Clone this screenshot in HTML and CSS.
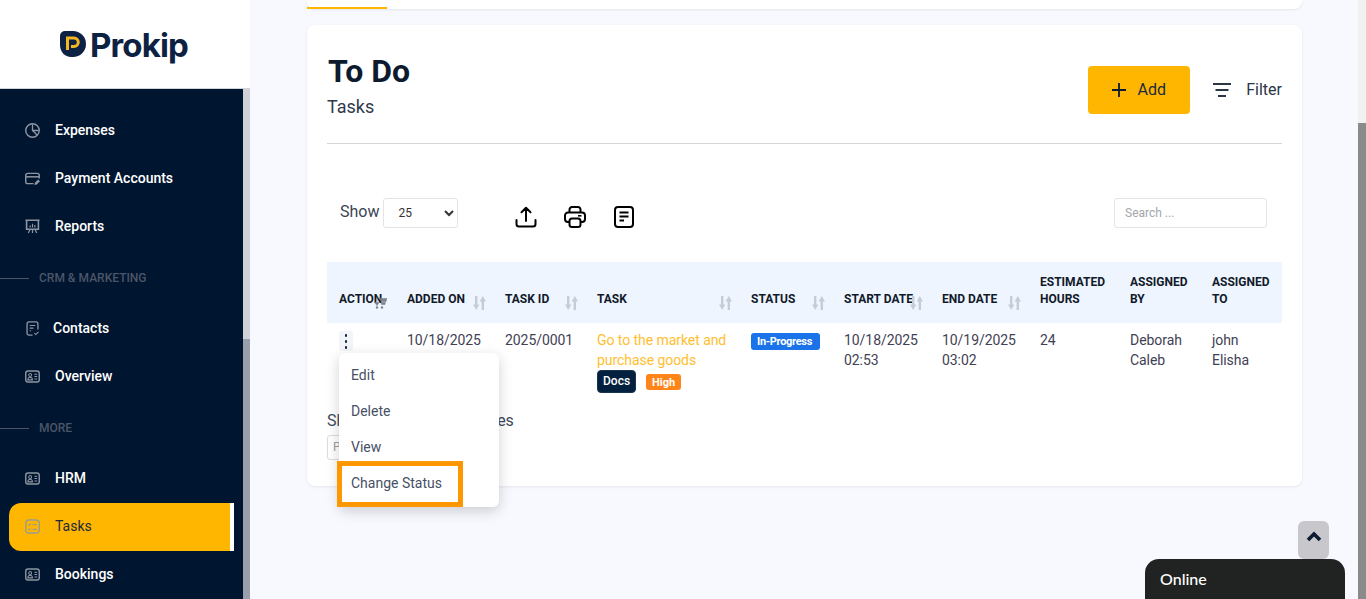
FILE: index.html
```html
<!DOCTYPE html>
<html lang="en">
<head>
<meta charset="utf-8">
<title>Tasks</title>
<link rel="stylesheet" href="styles.css">
</head>
<body>
<svg class="defs" width="0" height="0" aria-hidden="true">
  <symbol id="idcard" viewBox="0 0 16 16">
    <rect x=".8" y="2.200" width="14.400" height="11.600" rx="2.400" fill="none" stroke="currentColor" stroke-width="1.500"/>
    <circle cx="5.500" cy="6.400" r="1.500" fill="none" stroke="currentColor" stroke-width="1.100"/>
    <path d="M3 11.600c.2-2 1.200-2.700 2.500-2.700s2.300.7 2.500 2.700z" fill="none" stroke="currentColor" stroke-width="1.100"/>
    <path d="M10 5.600h3M10 8h3M10 10.600h3" stroke="currentColor" stroke-width="1.200" fill="none"/>
  </symbol>
  <symbol id="sort" viewBox="0 0 13 14">
    <path d="M3.200 0v11" stroke="currentColor" stroke-width="2.400" fill="none"/>
    <path d="M0 8.500h6.400L3.200 14z" fill="currentColor"/>
    <path d="M9.800 14V3" stroke="currentColor" stroke-width="2.400" fill="none"/>
    <path d="M6.600 5.500H13L9.800 0z" fill="currentColor"/>
  </symbol>
</svg>

<aside class="sidebar">
  <div class="brand">
    <svg class="brand-mark" viewBox="0 0 26 26" width="26" height="26">
      <path d="M5 0h8a13 13 0 0 1 0 26h-2C5 26 0 21 0 14V5a5 5 0 0 1 5-5z" fill="#0d2143"/>
      <path d="M7.500 19V7h6.500a4.200 4.200 0 0 1 0 8.500H11" fill="none" stroke="#f2b722" stroke-width="3"/>
    </svg>
    <span class="brand-name">Prokip</span>
  </div>
  <div class="side-body">
    <nav class="nav">
      <a class="nav-item">
        <svg class="nav-icon" viewBox="0 0 16 16"><circle cx="8" cy="8" r="7.200" fill="none" stroke="currentColor" stroke-width="1.500"/><path d="M8 1.500V8l4.700 4.500M8 8h6.700" fill="none" stroke="currentColor" stroke-width="1.400"/></svg>
        <span>Expenses</span>
      </a>
      <a class="nav-item">
        <svg class="nav-icon" viewBox="0 0 16 16"><path d="M9 13.500H2.800A2 2 0 0 1 .8 11.500V4.500a2 2 0 0 1 2-2h10.400a2 2 0 0 1 2 2V8" fill="none" stroke="currentColor" stroke-width="1.500"/><path d="M1 6.200h14" stroke="currentColor" stroke-width="1.600"/><path d="M10 15l.5-2.500 3.500-3.500 2 2-3.500 3.500z" fill="currentColor"/></svg>
        <span>Payment Accounts</span>
      </a>
      <a class="nav-item">
        <svg class="nav-icon" viewBox="0 0 16 16"><path d="M.5 1.300h15M1.700 1.500v9.500h12.600V1.500" fill="none" stroke="currentColor" stroke-width="1.700"/><path d="M5.500 9V7M8 9V5M10.500 9V6.500M5.500 11l-2 4M10.500 11l2 4M8 11v4" stroke="currentColor" stroke-width="1.300" fill="none"/></svg>
        <span>Reports</span>
      </a>
      <div class="nav-section"><span class="nav-rule"></span><span>CRM &amp; MARKETING</span></div>
      <a class="nav-item nav-item-tight">
        <svg class="nav-icon" viewBox="0 0 16 16"><path d="M8 15H4.200A2 2 0 0 1 2.200 13V3a2 2 0 0 1 2-2h7.600a2 2 0 0 1 2 2V9" fill="none" stroke="currentColor" stroke-width="1.400"/><path d="M5 4.800h6M5 7.600h4M5 10.400h1.500" stroke="currentColor" stroke-width="1.300"/><path d="M10 13l1.500 1.500 3-3" fill="none" stroke="currentColor" stroke-width="1.100"/></svg>
        <span>Contacts</span>
      </a>
      <a class="nav-item">
        <svg class="nav-icon"><use href="#idcard"/></svg>
        <span>Overview</span>
      </a>
      <div class="nav-section"><span class="nav-rule"></span><span>MORE</span></div>
      <a class="nav-item">
        <svg class="nav-icon"><use href="#idcard"/></svg>
        <span>HRM</span>
      </a>
      <a class="nav-item nav-item-active">
        <svg class="nav-icon" viewBox="0 0 16 16"><rect x=".8" y="1" width="14.400" height="14" rx="3.500" fill="none" stroke="currentColor" stroke-width="1.500"/><path d="M3.500 5.500l1 1 1.500-1.500M3.500 10.500l1 1 1.500-1.500M8 6h4.500M8 11h4.500" fill="none" stroke="currentColor" stroke-width="1.200"/></svg>
        <span>Tasks</span>
      </a>
      <a class="nav-item">
        <svg class="nav-icon"><use href="#idcard"/></svg>
        <span>Bookings</span>
      </a>
    </nav>
    <div class="side-scroll"><div class="side-thumb"></div></div>
  </div>
</aside>

<main class="main">
  <div class="tab-strip"><span class="tab-active"></span></div>

  <section class="card">
    <header class="card-head">
      <div>
        <h1 class="title">To Do</h1>
        <p class="subtitle">Tasks</p>
      </div>
      <div class="head-actions">
        <button class="btn-add" type="button">
          <svg viewBox="0 0 16 16" width="16" height="16"><path d="M8 1v14M1 8h14" stroke="#0d1b30" stroke-width="1.800" fill="none"/></svg>
          <span class="btn-label">Add</span>
        </button>
        <button class="btn-filter" type="button">
          <svg viewBox="0 0 18 14" width="18" height="14"><path d="M0 1h18M2.500 7h13M5 13h8" stroke="#2b3546" stroke-width="1.800" fill="none"/></svg>
          <span class="btn-label">Filter</span>
        </button>
      </div>
    </header>

    <div class="toolbar">
      <label class="show">Show
        <select class="show-select"><option>25</option></select>
      </label>
      <div class="tools">
        <svg viewBox="0 0 22 22" width="22" height="22"><path d="M11 15V2M6.500 6.200L11 1.800l4.500 4.400M1.500 14v4a2.500 2.500 0 0 0 2.500 2.500h14a2.500 2.500 0 0 0 2.500-2.500v-4" fill="none" stroke="#000" stroke-width="2" stroke-linecap="round" stroke-linejoin="round"/></svg>
        <svg viewBox="0 0 22 22" width="22" height="22"><path d="M5.500 6.500V3.500a2.500 2.500 0 0 1 2.500-2.500h6a2.500 2.500 0 0 1 2.500 2.500v3M5 16H4a3 3 0 0 1-3-3V9.500a3 3 0 0 1 3-3h14a3 3 0 0 1 3 3V13a3 3 0 0 1-3 3h-1" fill="none" stroke="#000" stroke-width="2"/><rect x="5.500" y="12.500" width="11" height="8.500" rx="2.500" fill="none" stroke="#000" stroke-width="2"/><path d="M14 9.800h3.500" stroke="#000" stroke-width="1.600"/></svg>
        <svg viewBox="0 0 20 22" width="20" height="22"><rect x="1" y="1" width="18" height="20" rx="3" fill="none" stroke="#000" stroke-width="2"/><path d="M5.500 6.500h9M5.500 10.500h9M5.500 14.500h4.500" stroke="#000" stroke-width="1.800"/></svg>
      </div>
      <input class="search" type="text" placeholder="Search ...">
    </div>

    <table class="table">
      <thead>
        <tr>
          <th class="c-action">Action
            <svg class="cart" viewBox="0 0 13 13" width="13" height="13"><path d="M3 .5v8M.8 6.500L3 9.500l2.200-3zM6 2.500h7l-1 3H7zM7 6.500h4.500l-.6 2H7.600z" fill="currentColor" stroke="currentColor" stroke-width=".6"/><circle cx="3" cy="11.500" r="1.200" fill="currentColor"/><circle cx="8" cy="11.500" r="1.200" fill="currentColor"/></svg>
          </th>
          <th class="c-added">Added on <svg class="sort"><use href="#sort"/></svg></th>
          <th class="c-id">Task ID <svg class="sort"><use href="#sort"/></svg></th>
          <th class="c-task">Task <svg class="sort"><use href="#sort"/></svg></th>
          <th class="c-status">Status <svg class="sort"><use href="#sort"/></svg></th>
          <th class="c-start">Start Date <svg class="sort"><use href="#sort"/></svg></th>
          <th class="c-end">End Date <svg class="sort"><use href="#sort"/></svg></th>
          <th class="c-hours">Estimated Hours</th>
          <th class="c-by">Assigned By</th>
          <th class="c-to">Assigned To</th>
        </tr>
      </thead>
      <tbody>
        <tr>
          <td>
            <span class="kebab"><i></i><i></i><i></i></span>
            <ul class="menu">
              <li>Edit</li>
              <li>Delete</li>
              <li>View</li>
              <li class="menu-mark">Change Status</li>
            </ul>
          </td>
          <td>10/18/2025</td>
          <td>2025/0001</td>
          <td class="task-cell">
            <a class="task-link">Go to the market and purchase goods</a>
            <div class="tags"><span class="tag tag-docs">Docs</span><span class="tag tag-high">High</span></div>
          </td>
          <td><span class="tag tag-status">In-Progress</span></td>
          <td>10/18/2025 02:53</td>
          <td>10/19/2025 03:02</td>
          <td>24</td>
          <td>Deborah Caleb</td>
          <td>john Elisha</td>
        </tr>
      </tbody>
    </table>

    <p class="entries">Showing 1 to 1 of 1 entries</p>
    <span class="pager">Previous</span>
  </section>

  <button class="to-top" type="button" aria-label="Back to top">
    <svg viewBox="0 0 16 11" width="16" height="11"><path d="M2 9l6-6 6 6" fill="none" stroke="#0d1b30" stroke-width="3.600"/></svg>
  </button>
  <div class="chat">Online</div>
</main>

<div class="page-scroll"><div class="page-thumb"></div></div>
</body>
</html>
```
FILE: styles.css
```css
*, *::before, *::after { box-sizing: border-box; }
html, body { height: 100%; }
body {
  margin: 0;
  display: flex;
  height: 599px;
  overflow: hidden;
  background: #f8f9fe;
  color: #3f4254;
  font-family: Roboto, "Liberation Sans", sans-serif;
}
.defs { position: absolute; }

/* Sidebar */
.sidebar { width: 250px; flex: none; display: flex; flex-direction: column; height: 599px; }
.brand {
  height: 89px; flex: none; background: #fff; border-bottom: 1px solid #d3d5da;
  display: flex; align-items: center; justify-content: center; gap: 4px; padding-right: 2px;
}
.brand-mark { flex: none; }
.brand-name { font-family: Inter, Lato, sans-serif; font-weight: 700; font-size: 33px; letter-spacing: -.85px; color: #0d2143; line-height: 40px; padding-top: 2px; }
.side-body { flex: 1; display: flex; min-height: 0; }
.nav { flex: 1; background: #00152f; padding: 17px 0 0; overflow: hidden; display: flex; flex-direction: column; }
.side-scroll { width: 7px; background: #d0d2d8; padding-top: 250px; }
.side-thumb { height: 100%; background: #9a9fac; }
.nav-item {
  height: 48px; flex: none; margin: 0 9px; padding-left: 16px; width: 225px;
  display: flex; align-items: center; gap: 15px;
  color: #fff; font-size: 14px; font-weight: 500;
}
.nav-item-tight { gap: 13px; }
.nav-icon { width: 15px; height: 15px; flex: none; color: #8f96a3; }
.nav-item-active {
  background: #ffb600; color: #1d2a3c; border-radius: 12px 0 0 12px; border-right: 4px solid #fff;
  font-weight: 400; margin-top: 1px; margin-bottom: -1px; padding-bottom: 2px;
}
.nav-item-active .nav-icon { color: #9a9c93; }
.nav-section {
  height: 54px; flex: none; display: flex; align-items: center; gap: 10px;
  color: #4b5568; font-size: 12px; font-weight: 500; padding-top: 2px;
}
.nav-rule { width: 29px; height: 1px; background: #4b5568; }

/* Main */
.main { flex: 1; min-width: 0; padding: 0 56px 0 57px; position: relative; }
.tab-strip { height: 9px; background: #fff; border-radius: 0 0 8px 8px; display: flex; align-items: flex-end; box-shadow: 0 1px 3px rgba(0,0,0,.08); }
.tab-active { width: 80px; height: 2px; background: #ffb600; }
.card {
  margin-top: 16px; height: 461px; background: #fff; border-radius: 8px;
  padding: 0 20px; box-shadow: 0 1px 3px rgba(0,0,0,.08);
}
.card-head {
  height: 119px; border-bottom: 1px solid #d5d6d9;
  display: flex; justify-content: space-between; padding-top: 27px;
}
.title { margin: 0 0 0 1px; font-size: 32px; line-height: 38px; font-weight: 700; color: #0e1a2e; }
.subtitle { margin: 4px 0 0; font-size: 18px; line-height: 26px; color: #2f3a4c; }
.head-actions { display: flex; align-items: flex-start; gap: 23px; padding-top: 14px; }
.btn-add {
  width: 102px; height: 48px; background: #ffb600; border: 0; border-radius: 4px;
  display: flex; align-items: center; justify-content: center; gap: 10px;
  font: 400 16px Roboto, sans-serif; color: #1d2a3c; padding: 0 1px 0 0;
}
.btn-filter {
  height: 48px; background: none; border: 0; padding: 0;
  display: flex; align-items: center; gap: 15px;
  font: 400 16px Roboto, sans-serif; color: #2b3546;
}
.btn-label { padding-bottom: 2px; }
.toolbar { display: flex; align-items: center; height: 30px; margin-top: 54px; padding-left: 13px; }
.show { display: flex; align-items: center; gap: 4px; font-size: 16px; color: #3a4456; height: 30px; padding-bottom: 4px; }
.show-select {
  width: 75px; height: 30px; margin-top: 4px; border: 1px solid #e2e4e8; border-radius: 3px;
  background: #fff; font: 400 12px Roboto, sans-serif; color: #333; padding-left: 10px;
}
.tools { display: flex; align-items: center; gap: 27px; margin-left: 57px; padding-top: 8px; height: 30px; }
.tools svg:last-child { margin-left: 1px; }
.search {
  margin-left: auto; margin-right: 15px; width: 153px; height: 30px;
  border: 1px solid #e2e4e8; border-radius: 3px; padding: 0 10px;
  font: 400 12px Roboto, sans-serif;
}
.search::placeholder { color: #a4a6ab; opacity: 1; }

/* Table */
.table { table-layout: fixed; width: 955px; border-collapse: collapse; margin-top: 34px; }
.table th {
  position: relative; background: #eff5fe; height: 61px; padding: 0 12px 15px;
  font-size: 12px; line-height: 17px; font-weight: 700; text-transform: uppercase;
  color: #111a2a; text-align: left; vertical-align: bottom;
}
.table td {
  position: relative; vertical-align: top; padding: 7px 12px 0;
  font-size: 14px; line-height: 20px; color: #3f4254; letter-spacing: -.06px;
}
.table td.task-cell { padding-right: 8px; }
.c-action { width: 68px; }
.c-added { width: 98px; }
.c-id { width: 92px; }
.c-task { width: 154px; }
.c-status { width: 93px; }
.c-start { width: 98px; }
.c-end { width: 98px; }
.c-hours { width: 90px; }
.c-by { width: 82px; }
.c-to { width: 82px; }
.table th.c-action, .table th.c-added, .table th.c-start, .table th.c-end { white-space: nowrap; }
.sort { position: absolute; right: 7px; top: 34px; width: 13px; height: 14px; color: #c6ccd5; }
.cart { position: absolute; right: 8px; top: 34px; color: #7d838e; }
.kebab {
  display: flex; flex-direction: column; align-items: center; justify-content: center; gap: 3px;
  width: 14px; height: 20px; background: #f3f4f7; border-radius: 3px; margin-top: 1px;
}
.kebab i { width: 2px; height: 3px; background: #0d2143; border-radius: 1px; }
.menu {
  position: absolute; left: 12px; top: 30px; width: 160px; margin: 0; padding: 4px 0 6px;
  list-style: none; background: #fff; border-radius: 6px; z-index: 3;
  box-shadow: 0 4px 14px rgba(0,0,0,.18);
  font-size: 14px; color: #475066; letter-spacing: 0;
}
.menu li { height: 36px; line-height: 36px; padding-left: 12px; }
.menu-mark { position: relative; }
.menu-mark::after {
  content: ""; position: absolute; left: -2px; top: -4px; width: 126px; height: 46px;
  border: 5px solid #ff9800;
}
.task-link { color: #ffbe2e; }
.tags { display: flex; gap: 10px; align-items: center; margin-top: 0; }
.tag { display: inline-block; font-size: 11px; font-weight: 700; line-height: 1; border-radius: 3px; color: #fff; letter-spacing: 0; }
.tag-docs { background: #03203f; font-size: 12px; font-weight: 500; padding: 4px 5px 5px; border: 1px solid #1a3450; border-radius: 4px; }
.tag-high { background: #ff851a; padding: 3px 6px 2px; }
.tag-status { background: #1a73e8; padding: 3px 6px; margin-top: 3px; letter-spacing: -.3px; display: block; width: 69px; white-space: nowrap; }
.entries { margin: 0; position: absolute; left: 77px; top: 411px; font-size: 16px; line-height: 20px; color: #3f4a5c; letter-spacing: -.1px; }
.pager {
  position: absolute; left: 77px; top: 435px; height: 25px; width: 70px;
  border: 1px solid #dcdde0; border-radius: 3px; padding: 4px 5px; font-size: 12px; color: #9a9da3;
}

/* Floating */
.to-top {
  position: absolute; right: 29px; top: 521px; width: 31px; height: 38px; border: 0; padding: 0 0 8px;
  background: #c8c8cc; border-radius: 6px; display: flex; align-items: center; justify-content: center;
}
.chat {
  position: absolute; left: 895px; top: 559px; width: 200px; height: 40px;
  background: #212322; color: #fff; border-radius: 14px 14px 0 0;
  font: 500 16px Lato, sans-serif; padding: 10px 15px 0;
}
.page-scroll { width: 8px; flex: none; background: #f1f1f1; padding-top: 123px; }
.page-thumb { height: 100%; background: #8a8a8a; }
```
